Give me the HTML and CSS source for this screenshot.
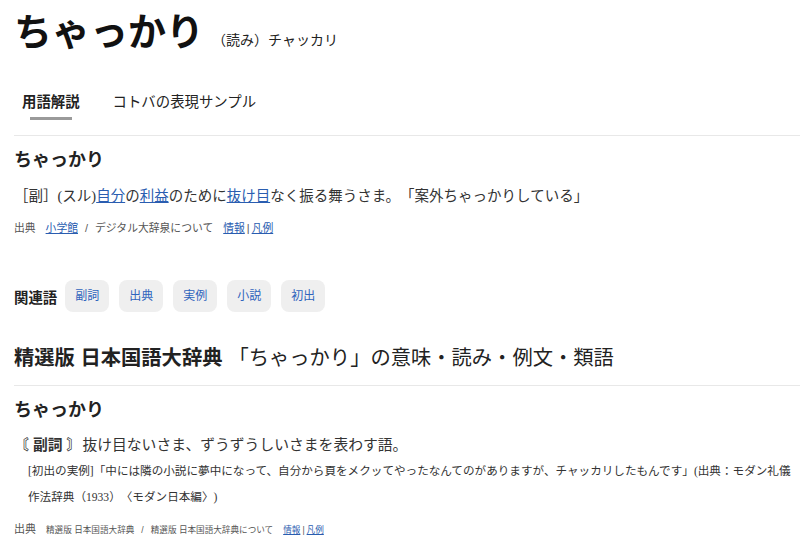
FILE: index.html
```html
<!DOCTYPE html>
<html lang="ja">

<head>
    <meta charset="UTF-8">
    <meta name="viewport" content="width=device-width, initial-scale=1.0">
    <title>ちゃっかり</title>
    <link rel="stylesheet" href="styles.css">
</head>

<body>
    <main class="page">
        <header class="word-head">
            <h1 class="word">ちゃっかり</h1>
            <span class="yomi">（読み）チャッカリ</span>
        </header>

        <nav class="tabs">
            <a class="tab active" href="#">用語解説</a>
            <a class="tab" href="#">コトバの表現サンプル</a>
        </nav>

        <section class="entry">
            <h2 class="entry-word">ちゃっかり</h2>
            <p class="def">［副］(スル)<a href="#">自分</a>の<a href="#">利益</a>のために<a href="#">抜け目</a>なく振る舞うさま。「案外ちゃっかりしている」</p>
            <p class="source">
                <span class="source-label">出典</span>
                <a href="#">小学館</a>
                <span class="slash">/</span>
                <span>デジタル大辞泉について</span>
                <a class="info" href="#">情報</a><span class="bar">|</span><a href="#">凡例</a>
            </p>
        </section>

        <div class="related">
            <span class="related-label">関連語</span>
            <a class="chip" href="#">副詞</a>
            <a class="chip" href="#">出典</a>
            <a class="chip" href="#">実例</a>
            <a class="chip" href="#">小説</a>
            <a class="chip" href="#">初出</a>
        </div>

        <section class="dict">
            <h2 class="dict-title"><b>精選版 日本国語大辞典</b><span class="dict-sub">「ちゃっかり」の意味・読み・例文・類語</span></h2>
            <h3 class="entry-word">ちゃっかり</h3>
            <p class="def def-large"><b class="pos">〘 副詞 〙</b>抜け目ないさま、ずうずうしいさまを表わす語。</p>
            <p class="example">[初出の実例]「中には隣の小説に夢中になって、自分から頁をメクッてやったなんてのがありますが、チャッカリしたもんです」(出典：モダン礼儀作法辞典（1933）〈モダン日本編〉)</p>
            <p class="source source-small">
                <span class="source-label">出典</span>
                <span>精選版 日本国語大辞典</span>
                <span class="slash">/</span>
                <span>精選版 日本国語大辞典について</span>
                <a class="info" href="#">情報</a><span class="bar">|</span><a href="#">凡例</a>
            </p>
        </section>
    </main>
</body>

</html>
```

FILE: styles.css
```css
body {
    margin: 0;
    background-color: white;
    color: #222;
    font-family: "Liberation Sans", "Noto Sans CJK JP", sans-serif;
    text-spacing-trim: space-all;
}

a {
    color: #2a5db0;
}

.page {
    padding: 9px 0 0 14px;
}

.word-head {
    display: flex;
    align-items: baseline;
    gap: 8px;
}

.word {
    margin: 0;
    font-family: "Liberation Serif", "Noto Sans CJK JP", serif;
    font-size: 38px;
    line-height: 46px;
    color: #111;
}

.yomi {
    font-family: "Liberation Serif", "Noto Sans CJK JP", serif;
    font-size: 14px;
    color: #222;
}

.tabs {
    display: flex;
    gap: 17px;
    margin-top: 37px;
    border-bottom: 1px solid #e8e8e8;
}

.tab {
    padding: 0 8px 15px;
    font-size: 14.4px;
    line-height: 20px;
    color: #222;
    text-decoration: none;
}

.tab::after {
    content: "";
    display: block;
    width: 42px;
    height: 3px;
    margin: 5px auto 0;
}

.tab.active {
    font-weight: bold;
}

.tab.active::after {
    background-color: #9a9a9a;
}

.entry-word {
    margin: 11px 0 0;
    font-size: 18px;
    line-height: 26px;
    font-weight: bold;
}

.def {
    margin: 11px 0 0;
    font-family: "Liberation Serif", "Noto Sans CJK JP", serif;
    font-size: 14.5px;
    line-height: 24px;
    color: #333;
}

.source {
    display: flex;
    align-items: baseline;
    margin: 12px 0 0;
    font-size: 10.8px;
    line-height: 16px;
    color: #555;
}

.source-label {
    margin-right: 10px;
}

.slash {
    margin: 0 7px;
}

.source .info {
    margin-left: 10px;
}

.bar {
    margin: 0 2px;
}

.related {
    display: flex;
    align-items: center;
    gap: 10px;
    margin-top: 44px;
}

.related-label {
    margin-right: -2px;
    font-size: 14.4px;
    font-weight: bold;
}

.chip {
    height: 32px;
    padding: 0 10px;
    border-radius: 8px;
    background-color: #efefef;
    font-size: 12px;
    line-height: 32px;
    color: #2f64bd;
    text-decoration: none;
}

.dict {
    margin-top: 32px;
}

.dict-title {
    margin: 0;
    padding-bottom: 13px;
    border-bottom: 1px solid #e8e8e8;
    font-size: 20.3px;
    line-height: 28px;
    font-weight: normal;
}

.dict-sub {
    margin-left: 6px;
}

.def-large {
    margin-top: 10px;
    font-size: 14.8px;
}

.pos {
    margin-right: 1px;
    font-family: "Liberation Sans", "Noto Sans CJK JP", sans-serif;
}

.example {
    margin: 2px 0 0;
    padding-left: 14px;
    font-family: "Liberation Serif", "Noto Sans CJK JP", serif;
    font-size: 11.6px;
    line-height: 26px;
    color: #333;
}

.source-small {
    margin-top: 10px;
    font-size: 8.6px;
}

.source-small .source-label {
    font-size: 11px;
}
```
